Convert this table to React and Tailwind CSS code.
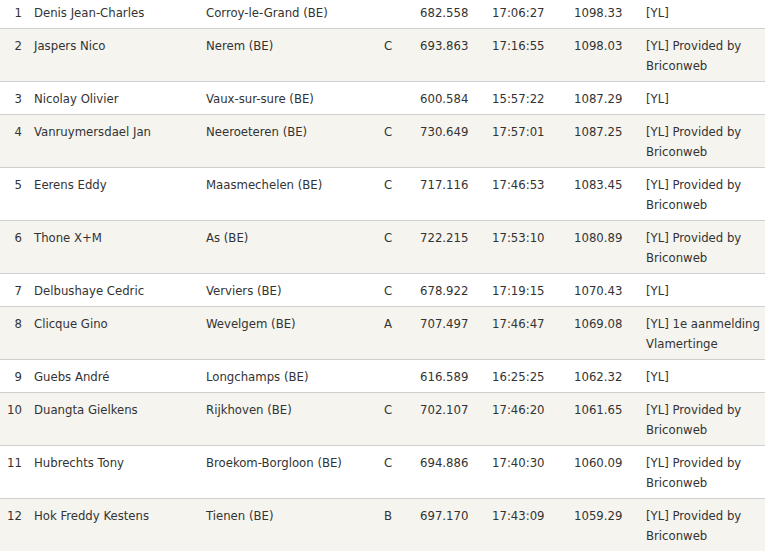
import React from "react";

const rows = [
  ["1", "Denis Jean-Charles", "Corroy-le-Grand (BE)", "", "682.558", "17:06:27", "1098.33", ["[YL]"]],
  ["2", "Jaspers Nico", "Nerem (BE)", "C", "693.863", "17:16:55", "1098.03", ["[YL] Provided by", "Briconweb"]],
  ["3", "Nicolay Olivier", "Vaux-sur-sure (BE)", "", "600.584", "15:57:22", "1087.29", ["[YL]"]],
  ["4", "Vanruymersdael Jan", "Neeroeteren (BE)", "C", "730.649", "17:57:01", "1087.25", ["[YL] Provided by", "Briconweb"]],
  ["5", "Eerens Eddy", "Maasmechelen (BE)", "C", "717.116", "17:46:53", "1083.45", ["[YL] Provided by", "Briconweb"]],
  ["6", "Thone X+M", "As (BE)", "C", "722.215", "17:53:10", "1080.89", ["[YL] Provided by", "Briconweb"]],
  ["7", "Delbushaye Cedric", "Verviers (BE)", "C", "678.922", "17:19:15", "1070.43", ["[YL]"]],
  ["8", "Clicque Gino", "Wevelgem (BE)", "A", "707.497", "17:46:47", "1069.08", ["[YL] 1e aanmelding", "Vlamertinge"]],
  ["9", "Guebs André", "Longchamps (BE)", "", "616.589", "16:25:25", "1062.32", ["[YL]"]],
  ["10", "Duangta Gielkens", "Rijkhoven (BE)", "C", "702.107", "17:46:20", "1061.65", ["[YL] Provided by", "Briconweb"]],
  ["11", "Hubrechts Tony", "Broekom-Borgloon (BE)", "C", "694.886", "17:40:30", "1060.09", ["[YL] Provided by", "Briconweb"]],
  ["12", "Hok Freddy Kestens", "Tienen (BE)", "B", "697.170", "17:43:09", "1059.29", ["[YL] Provided by", "Briconweb"]],
];

export default function App() {
  return (
    <div
      className="w-[765px] h-[551px] overflow-hidden bg-white text-[#333] text-[13px] leading-[20px]"
      style={{ fontFamily: '"DejaVu Sans Condensed", "DejaVu Sans", sans-serif' }}
    >
      <table className="w-[765px] table-fixed border-collapse -mt-[4px]">
        <colgroup>
          <col className="w-[28px]" />
          <col className="w-[172px]" />
          <col className="w-[178px]" />
          <col className="w-[36px]" />
          <col className="w-[72px]" />
          <col className="w-[82px]" />
          <col className="w-[72px]" />
          <col className="w-[125px]" />
        </colgroup>
        <tbody>
          {rows.map((r, i) => (
            <tr
              key={r[0]}
              className={`border-b border-[#cfcfcf] ${i % 2 === 1 ? "bg-[#f5f4ef]" : "bg-white"}`}
            >
              <td className="pt-[7px] pb-[5px] pr-[6px] text-right align-top whitespace-nowrap">{r[0]}</td>
              <td className="pt-[7px] pb-[5px] pl-[6px] align-top whitespace-nowrap">{r[1]}</td>
              <td className="pt-[7px] pb-[5px] pl-[6px] align-top whitespace-nowrap">{r[2]}</td>
              <td className="pt-[7px] pb-[5px] pl-[6px] align-top whitespace-nowrap">{r[3]}</td>
              <td className="pt-[7px] pb-[5px] pl-[6px] align-top whitespace-nowrap">{r[4]}</td>
              <td className="pt-[7px] pb-[5px] pl-[6px] align-top whitespace-nowrap">{r[5]}</td>
              <td className="pt-[7px] pb-[5px] pl-[6px] align-top whitespace-nowrap">{r[6]}</td>
              <td className="pt-[7px] pb-[5px] pl-[6px] align-top whitespace-nowrap">
                {r[7].map((l, j) => (
                  <div key={j}>{l}</div>
                ))}
              </td>
            </tr>
          ))}
        </tbody>
      </table>
    </div>
  );
}
